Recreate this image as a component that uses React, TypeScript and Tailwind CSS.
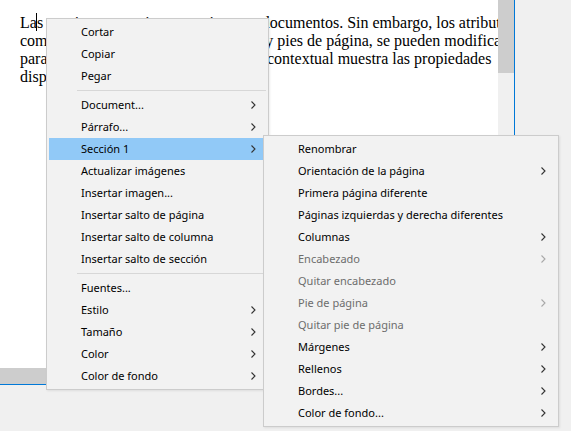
import React from 'react';

type Item = {
  label?: string;
  sub?: boolean;
  disabled?: boolean;
  active?: boolean;
  sep?: boolean;
};

const MAIN: Item[] = [
  { label: 'Cortar' },
  { label: 'Copiar' },
  { label: 'Pegar' },
  { sep: true },
  { label: 'Document...', sub: true },
  { label: 'Párrafo...', sub: true },
  { label: 'Sección 1', sub: true, active: true },
  { label: 'Actualizar imágenes' },
  { label: 'Insertar imagen...' },
  { label: 'Insertar salto de página' },
  { label: 'Insertar salto de columna' },
  { label: 'Insertar salto de sección' },
  { sep: true },
  { label: 'Fuentes...' },
  { label: 'Estilo', sub: true },
  { label: 'Tamaño', sub: true },
  { label: 'Color', sub: true },
  { label: 'Color de fondo', sub: true },
];

const SECTION: Item[] = [
  { label: 'Renombrar' },
  { label: 'Orientación de la página', sub: true },
  { label: 'Primera página diferente' },
  { label: 'Páginas izquierdas y derecha diferentes' },
  { label: 'Columnas', sub: true },
  { label: 'Encabezado', sub: true, disabled: true },
  { label: 'Quitar encabezado', disabled: true },
  { label: 'Pie de página', sub: true, disabled: true },
  { label: 'Quitar pie de página', disabled: true },
  { label: 'Márgenes', sub: true },
  { label: 'Rellenos', sub: true },
  { label: 'Bordes...', sub: true },
  { label: 'Color de fondo...', sub: true },
];

function Chevron({ disabled }: { disabled?: boolean }) {
  return (
    <svg width="5" height="8" viewBox="0 0 5 8" className="shrink-0">
      <polyline
        points="0.5,0.5 4,4 0.5,7.5"
        fill="none"
        stroke={disabled ? '#a8a8a8' : '#333333'}
        strokeWidth="1.1"
      />
    </svg>
  );
}

function Menu({ items }: { items: Item[] }) {
  return (
    <div className="flex flex-col bg-[#f2f2f2] border border-[#cccccc] px-[2px] py-[2px] shadow-[1px_1px_2px_rgba(0,0,0,0.08)]">
      {items.map((it, i) =>
        it.sep ? (
          <div key={i} className="h-[7px] flex items-center pl-[28px]">
            <div className="h-px w-full bg-[#d7d7d7]" />
          </div>
        ) : (
          <div
            key={i}
            className={`h-[22px] flex items-center pl-[32px] pr-[10px] ${
              it.active ? 'bg-[#91c9f7]' : ''
            } ${it.disabled ? 'text-[#6d6d6d]' : 'text-black'}`}
          >
            <span className="flex-1 whitespace-nowrap">{it.label}</span>
            {it.sub && <Chevron disabled={it.disabled} />}
          </div>
        )
      )}
    </div>
  );
}

export default function App() {
  return (
    <div className="relative w-[571px] h-[431px] overflow-hidden bg-[#f0f0f0] font-['Noto_Sans',sans-serif] text-[11px]">
      {/* Editor */}
      <div className="w-[515px] h-[385px] flex flex-col border-r border-b border-[#0078d7]">
        <div className="flex flex-1 min-h-0">
          <div className="relative flex-1 bg-white overflow-hidden pl-[20px] pt-[14px] font-['Liberation_Serif',serif] text-[16px] leading-[18px] text-black">
            <div className="whitespace-nowrap">
              Las secciones permiten organizar sus documentos. Sin embargo, los atributos
            </div>
            <div className="whitespace-nowrap">
              comunes, tales como los encabezados y pies de página, se pueden modificar para
            </div>
            <div className="whitespace-nowrap">
              para la sección por separado. El menú contextual muestra las propiedades
            </div>
            <div className="whitespace-nowrap">disponibles de la sección actual.</div>
            <div className="absolute left-[36px] top-[13px] w-px h-[18px] bg-black" />
          </div>
          <div className="w-[16px] bg-[#f0f0f0] flex flex-col">
            <div className="h-[73px] bg-[#cdcdcd]" />
          </div>
        </div>
        <div className="h-[16px] bg-[#f0f0f0] flex">
          <div className="w-[220px] bg-[#cdcdcd]" />
        </div>
      </div>

      {/* Context menu */}
      <div className="absolute left-[46px] top-[18px] w-[223px]">
        <Menu items={MAIN} />
      </div>

      {/* Section submenu */}
      <div className="absolute left-[263px] top-[135px] w-[296px]">
        <Menu items={SECTION} />
      </div>
    </div>
  );
}
